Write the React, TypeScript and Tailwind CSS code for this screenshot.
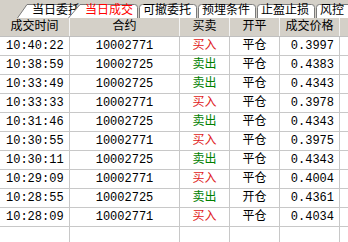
import React from 'react';

type Trade = { time: string; code: string; side: '买入' | '卖出'; oc: string; price: string };

const trades: Trade[] = [
  { time: '10:40:22', code: '10002771', side: '买入', oc: '平仓', price: '0.3997' },
  { time: '10:38:59', code: '10002725', side: '卖出', oc: '平仓', price: '0.4383' },
  { time: '10:33:49', code: '10002725', side: '卖出', oc: '平仓', price: '0.4343' },
  { time: '10:33:33', code: '10002771', side: '买入', oc: '平仓', price: '0.3978' },
  { time: '10:31:46', code: '10002725', side: '卖出', oc: '平仓', price: '0.4343' },
  { time: '10:30:55', code: '10002771', side: '买入', oc: '平仓', price: '0.3975' },
  { time: '10:30:11', code: '10002725', side: '卖出', oc: '平仓', price: '0.4343' },
  { time: '10:29:09', code: '10002771', side: '买入', oc: '平仓', price: '0.4004' },
  { time: '10:28:55', code: '10002725', side: '卖出', oc: '开仓', price: '0.4361' },
  { time: '10:28:09', code: '10002771', side: '买入', oc: '平仓', price: '0.4034' },
];

function Tab({ label, width, slant = 0, active = false, className = '' }: {
  label: string; width: number; slant?: number; active?: boolean; className?: string;
}) {
  const h = 14;
  const d = slant
    ? `M0.5,${h} L${slant},0.5 L${width - 3.5},0.5 Q${width - 0.5},0.5 ${width - 0.5},3.5 L${width - 0.5},${h}`
    : `M0.5,${h} L0.5,3.5 Q0.5,0.5 3.5,0.5 L${width - 3.5},0.5 Q${width - 0.5},0.5 ${width - 0.5},3.5 L${width - 0.5},${h}`;
  return (
    <div className={`relative h-[14px] shrink-0 ${className}`} style={{ width }}>
      <svg className="absolute inset-0" width={width} height={h}>
        <path d={d + ' Z'} fill="#ffffff" stroke="none" />
        <path d={d} fill="none" stroke="#7a7a7a" strokeWidth="1" />
      </svg>
      <span
        className={`relative block text-[12px] leading-[14px] whitespace-nowrap ${active ? 'text-[#ff0000]' : 'text-black'}`}
        style={{ paddingLeft: slant ? slant + 5 : 4 }}
      >
        {label}
      </span>
    </div>
  );
}

const cols = [
  { w: 'w-[70px]', align: 'justify-start pl-[6px]' },
  { w: 'w-[110px]', align: 'justify-center' },
  { w: 'w-[50px]', align: 'justify-center' },
  { w: 'w-[50px]', align: 'justify-center' },
  { w: 'w-[60px]', align: 'justify-end pr-[5px]' },
];

export default function App() {
  const heads = ['成交时间', '合约', '买卖', '开平', '成交价格'];
  return (
    <div className="w-[348px] h-[242px] overflow-hidden bg-white font-['Liberation_Mono','Noto_Sans_CJK_SC',monospace] text-[12px] text-black">
      {/* tab strip */}
      <div className="h-[18px] bg-[#d4d0c8] flex items-end pl-[17px] overflow-hidden">
        <Tab label="当日委托" width={60} slant={10} />
        <Tab label="当日成交" width={70} slant={12} active className="-ml-[9px] z-10" />
        <Tab label="可撤委托" width={58} className="ml-[1px]" />
        <Tab label="预埋条件" width={58} className="ml-[1px]" />
        <Tab label="止盈止损" width={58} className="ml-[1px]" />
        <Tab label="风控" width={58} className="ml-[1px]" />
      </div>

      {/* header */}
      <div className="flex h-[19px] bg-[#d4d0c8] border-b border-[#c0c0c0]">
        {heads.map((h, i) => (
          <div key={h} className={`${cols[i].w} shrink-0 flex items-center justify-center border-r border-[#f4f4f4] leading-[18px]`}>
            {h}
          </div>
        ))}
        <div className="flex-1" />
      </div>

      {/* rows */}
      {trades.map((t, r) => (
        <div key={r} className="flex h-[19px] border-b border-[#c8c8c8]">
          {[t.time, t.code, t.side, t.oc, t.price].map((v, i) => (
            <div
              key={i}
              className={`${cols[i].w} ${cols[i].align} shrink-0 flex items-center border-r border-[#c8c8c8] leading-[18px] ${
                i === 2 ? (v === '买入' ? 'text-[#e02020]' : 'text-[#008000]') : ''
              }`}
            >
              {v}
            </div>
          ))}
          <div className="flex-1" />
        </div>
      ))}
      <div className="flex h-[19px]">
        {cols.map((c, i) => (
          <div key={i} className={`${c.w} shrink-0 border-r border-[#c8c8c8]`} />
        ))}
      </div>
    </div>
  );
}
